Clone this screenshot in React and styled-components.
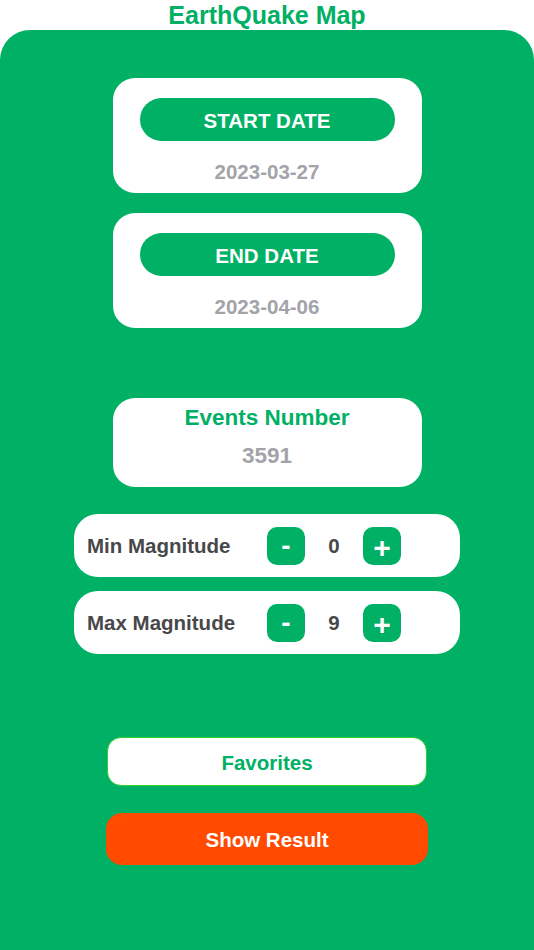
import React, { useState } from 'react';
import styled, { createGlobalStyle } from 'styled-components';

const GREEN = '#00b064';

const GlobalStyle = createGlobalStyle`
  html, body {
    margin: 0;
    padding: 0;
    background: #fff;
    font-family: "Liberation Sans", Arial, sans-serif;
  }
`;

const Page = styled.div`
  display: flex;
  flex-direction: column;
  height: 950px;
  overflow: hidden;
`;

const Title = styled.h1`
  margin: 0;
  height: 30px;
  line-height: 30px;
  text-align: center;
  font-size: 25px;
  font-weight: 700;
  color: ${GREEN};
`;

const Panel = styled.div`
  flex: 1;
  background: ${GREEN};
  border-radius: 30px 30px 0 0;
  display: flex;
  flex-direction: column;
  align-items: center;
  padding-top: 48px;
`;

const DateCard = styled.div`
  width: 309px;
  height: 115px;
  box-sizing: border-box;
  background: #fff;
  border-radius: 22px;
  display: flex;
  flex-direction: column;
  align-items: center;
  padding-top: 20px;
  margin-bottom: ${p => p.$gap || 0}px;
`;

const PillButton = styled.button`
  width: 255px;
  height: 43px;
  border: none;
  border-radius: 22px;
  background: ${GREEN};
  color: #fff;
  font-family: inherit;
  font-size: 20.5px;
  font-weight: 700;
  padding: 2px 0 0;
  cursor: pointer;
`;

const DateText = styled.div`
  margin-top: 19px;
  font-size: 20.5px;
  font-weight: 700;
  color: #a3a3aa;
`;

const EventsCard = styled.div`
  width: 309px;
  height: 89px;
  box-sizing: border-box;
  background: #fff;
  border-radius: 22px;
  display: flex;
  flex-direction: column;
  align-items: center;
  padding-top: 7px;
  gap: 12px;
  margin-bottom: 27px;
`;

const EventsTitle = styled.div`
  font-size: 22.5px;
  font-weight: 700;
  color: ${GREEN};
`;

const EventsValue = styled.div`
  font-size: 22.5px;
  font-weight: 700;
  color: #a3a3aa;
`;

const MagRow = styled.div`
  width: 386px;
  height: 63px;
  box-sizing: border-box;
  background: #fff;
  border-radius: 24px;
  display: flex;
  align-items: center;
  padding-left: 13px;
  margin-bottom: ${p => p.$gap || 0}px;
`;

const MagLabel = styled.div`
  width: 180px;
  font-size: 20.5px;
  font-weight: 700;
  color: #48484a;
`;

const StepButton = styled.button`
  width: 38px;
  height: 38px;
  border: none;
  border-radius: 10px;
  background: ${GREEN};
  color: #fff;
  font-family: inherit;
  font-size: ${p => (p.$plus ? 30 : 28)}px;
  font-weight: 700;
  line-height: 38px;
  padding: ${p => (p.$plus ? '2px 0 0' : '0')};
  cursor: pointer;
`;

const MagValue = styled.div`
  width: 58px;
  text-align: center;
  font-size: 20.5px;
  font-weight: 700;
  color: #48484a;
`;

const FavoritesButton = styled.button`
  width: 320px;
  height: 49px;
  box-sizing: border-box;
  background: #fff;
  border: 1px solid #2ed12e;
  border-radius: 14px;
  color: ${GREEN};
  font-family: inherit;
  font-size: 20.5px;
  font-weight: 700;
  padding: 2px 0 0;
  cursor: pointer;
  margin-bottom: 27px;
`;

const ResultButton = styled.button`
  width: 322px;
  height: 52px;
  border: none;
  border-radius: 16px;
  background: #ff4a00;
  color: #fff;
  font-family: inherit;
  font-size: 20.5px;
  font-weight: 700;
  padding: 2px 0 0;
  cursor: pointer;
`;

const Stepper = ({ label, value, onChange, gap }) => (
  <MagRow $gap={gap}>
    <MagLabel>{label}</MagLabel>
    <StepButton onClick={() => onChange(Math.max(0, value - 1))}>-</StepButton>
    <MagValue>{value}</MagValue>
    <StepButton $plus onClick={() => onChange(Math.min(9, value + 1))}>+</StepButton>
  </MagRow>
);

const App = () => {
  const [minMag, setMinMag] = useState(0);
  const [maxMag, setMaxMag] = useState(9);

  return (
    <Page>
      <GlobalStyle />
      <Title>EarthQuake Map</Title>
      <Panel>
        <DateCard $gap={20}>
          <PillButton>START DATE</PillButton>
          <DateText>2023-03-27</DateText>
        </DateCard>
        <DateCard $gap={70}>
          <PillButton>END DATE</PillButton>
          <DateText>2023-04-06</DateText>
        </DateCard>
        <EventsCard>
          <EventsTitle>Events Number</EventsTitle>
          <EventsValue>3591</EventsValue>
        </EventsCard>
        <Stepper label="Min Magnitude" value={minMag} onChange={setMinMag} gap={14} />
        <Stepper label="Max Magnitude" value={maxMag} onChange={setMaxMag} gap={83} />
        <FavoritesButton>Favorites</FavoritesButton>
        <ResultButton>Show Result</ResultButton>
      </Panel>
    </Page>
  );
};

export default App;
